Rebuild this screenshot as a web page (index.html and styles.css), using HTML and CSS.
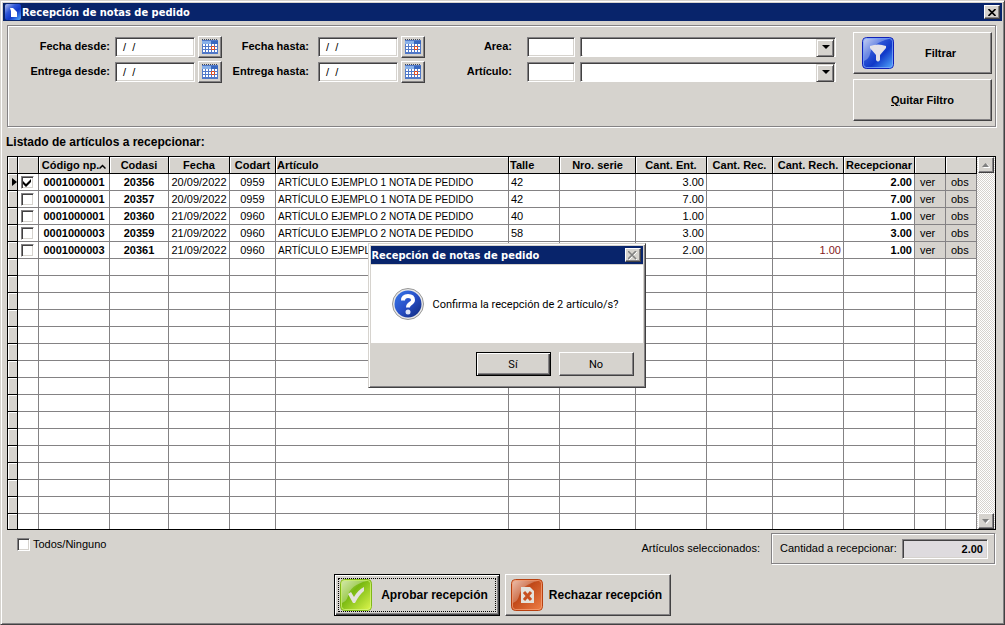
FILE: index.html
```html
<!DOCTYPE html>
<html lang="es">
<head>
    <meta charset="UTF-8">
    <meta name="viewport" content="width=device-width, initial-scale=1.0">
    <title>Recepción de notas de pedido</title>
    <link rel="stylesheet" href="styles.css">
</head>
<body>
<main class="window">
    <header class="titlebar">
        <svg class="app-icon" viewBox="0 0 16 16">
            <defs>
                <linearGradient id="blue" x1="0" y1="0" x2="1" y2="1">
                    <stop offset="0" stop-color="#b8c4f0"/>
                    <stop offset=".35" stop-color="#3058d8"/>
                    <stop offset=".6" stop-color="#1038c8"/>
                    <stop offset="1" stop-color="#58b0ff"/>
                </linearGradient>
            </defs>
            <rect width="16" height="16" rx="2" fill="url(#blue)"/>
            <path d="M5 4h3l4 4v5H6V7z" fill="#fff"/>
        </svg>
        <h1>Recepción de notas de pedido</h1>
        <button class="close" type="button" aria-label="Cerrar">
            <svg viewBox="0 0 8 7" width="8" height="7"><path d="M0 0l7 7M7 0L0 7" transform="translate(.5 0)" stroke="#000" stroke-width="1.600"/></svg>
        </button>
    </header>

    <form class="filters">
        <div class="fields">
            <label for="fdesde">Fecha desde:</label>
            <div class="date"><input id="fdesde" type="text" value="  /  /"><button type="button" class="cal" aria-label="Calendario"><svg width="16" height="16"><use href="#calendar"/></svg></button></div>
            <label for="fhasta">Fecha hasta:</label>
            <div class="date"><input id="fhasta" type="text" value="  /  /"><button type="button" class="cal" aria-label="Calendario"><svg width="16" height="16"><use href="#calendar"/></svg></button></div>
            <label for="area">Area:</label>
            <input id="area" type="text">
            <div class="combo"><select aria-label="Area"><option></option></select></div>

            <label for="edesde">Entrega desde:</label>
            <div class="date"><input id="edesde" type="text" value="  /  /"><button type="button" class="cal" aria-label="Calendario"><svg width="16" height="16"><use href="#calendar"/></svg></button></div>
            <label for="ehasta">Entrega hasta:</label>
            <div class="date"><input id="ehasta" type="text" value="  /  /"><button type="button" class="cal" aria-label="Calendario"><svg width="16" height="16"><use href="#calendar"/></svg></button></div>
            <label for="articulo">Artículo:</label>
            <input id="articulo" type="text">
            <div class="combo"><select aria-label="Artículo"><option></option></select></div>
        </div>
        <div class="filter-buttons">
            <button type="button" class="btn filtrar">
                <svg width="32" height="32" viewBox="0 0 32 32">
                    <rect x=".5" y=".5" width="31" height="31" rx="4" fill="url(#blue)" stroke="#1020b8"/>
                    <rect x="1.500" y="1.500" width="29" height="29" rx="3" fill="none" stroke="#88b0ff" opacity=".7"/>
                    <path d="M2 24V5q0-3 3-3h22Q10 6 8 17q-1 5-6 7z" fill="#fff" opacity=".3"/>
                    <path d="M8 9q8-3 16 0v2l-6 7v5q-2 3-4 0v-5l-6-7z" fill="#e4e2e8"/>
                </svg>
                <span>Filtrar</span>
            </button>
            <button type="button" class="btn"><span><u>Q</u>uitar Filtro</span></button>
        </div>
    </form>

    <h2>Listado de artículos a recepcionar:</h2>

    <div class="grid">
        <table>
            <colgroup>
                <col class="w-sel"><col class="w-check"><col class="w-np"><col class="w-codasi"><col class="w-fecha">
                <col class="w-codart"><col><col class="w-talle"><col class="w-serie"><col class="w-np">
                <col class="w-rec"><col class="w-np"><col class="w-np"><col class="w-link"><col class="w-link">
            </colgroup>
            <thead>
                <tr>
                    <th></th><th></th><th class="tight">Código np.<svg width="7" height="5" viewBox="0 0 7 5"><path d="M.5 4.500l3-3 3 3" fill="none" stroke="#000" stroke-width="1.500"/></svg></th><th>Codasi</th><th>Fecha</th><th>Codart</th>
                    <th class="left">Artículo</th><th class="left">Talle</th><th>Nro. serie</th><th>Cant. Ent.</th>
                    <th>Cant. Rec.</th><th>Cant. Rech.</th><th class="tight">Recepcionar</th><th></th><th></th>
                </tr>
            </thead>
            <tbody class="js-rows"></tbody>
        </table>
        <div class="scrollbar">
            <button type="button" aria-label="Subir"><svg width="8" height="5" viewBox="0 0 8 5"><path d="M1 5h8L5 1z" fill="#fff"/><path d="M0 4h7L3.500 0z" fill="#808080"/></svg></button>
            <button type="button" aria-label="Bajar"><svg width="8" height="5" viewBox="0 0 8 5"><path d="M1 1h7L4.500 5z" fill="#fff"/><path d="M0 0h7L3.500 4z" fill="#808080"/></svg></button>
        </div>
    </div>

    <div class="summary">
        <label class="all"><input type="checkbox" class="tick">Todos/Ninguno</label>
        <span class="selected">Artículos seleccionados:</span>
        <div class="total">
            <label for="cantidad">Cantidad a recepcionar:</label>
            <input id="cantidad" type="text" value="2.00" readonly>
        </div>
    </div>

    <div class="actions">
        <button type="button" class="btn big default">
            <svg width="32" height="32" viewBox="0 0 32 32">
                <defs>
                    <linearGradient id="green" x1="0" y1="0" x2="1" y2="1">
                        <stop offset="0" stop-color="#c8e090"/>
                        <stop offset=".4" stop-color="#78b810"/>
                        <stop offset="1" stop-color="#e0f850"/>
                    </linearGradient>
                </defs>
                <rect x=".5" y=".5" width="31" height="31" rx="4" fill="url(#green)" stroke="#80b818"/>
                <rect x="1.500" y="1.500" width="29" height="29" rx="3" fill="none" stroke="#d8f880" opacity=".7"/>
                <path d="M2 24V5q0-3 3-3h22Q10 6 8 17q-1 5-6 7z" fill="#fff" opacity=".3"/>
                <path d="M8 15l3-2 3 5q4-7 10-10v4q-5 4-9 12h-2z" fill="#e4e2dc"/>
            </svg>
            <span>Aprobar recepción</span>
        </button>
        <button type="button" class="btn big">
            <svg width="32" height="32" viewBox="0 0 32 32">
                <defs>
                    <linearGradient id="orange" x1="0" y1="0" x2="1" y2="1">
                        <stop offset="0" stop-color="#e8b098"/>
                        <stop offset=".4" stop-color="#c04818"/>
                        <stop offset="1" stop-color="#f08048"/>
                    </linearGradient>
                </defs>
                <rect x=".5" y=".5" width="31" height="31" rx="4" fill="url(#orange)" stroke="#b84010"/>
                <rect x="1.500" y="1.500" width="29" height="29" rx="3" fill="none" stroke="#f8a880" opacity=".7"/>
                <path d="M2 24V5q0-3 3-3h22Q10 6 8 17q-1 5-6 7z" fill="#fff" opacity=".25"/>
                <path d="M10 8h9l4 4v12H10z" fill="#e4e2dc"/>
                <path d="M13 13l7 8M20 13l-7 8" stroke="#c85020" stroke-width="3"/>
            </svg>
            <span>Rechazar recepción</span>
        </button>
    </div>

    <section class="dialog" role="dialog" aria-labelledby="dialog-title">
        <header class="titlebar">
            <h1 id="dialog-title">Recepción de notas de pedido</h1>
            <button class="close off" type="button" aria-label="Cerrar">
                <svg viewBox="0 0 9 9" width="9" height="9"><path d="M1 1l8 8M9 1L1 9" stroke="#fff"/><path d="M0 0l8 8M8 0L0 8" stroke="#808080" stroke-width="1.500"/></svg>
            </button>
        </header>
        <div class="message">
            <svg width="32" height="32" viewBox="0 0 32 32">
                <defs>
                    <linearGradient id="ask" x1="0" y1="0" x2="1" y2="1">
                        <stop offset="0" stop-color="#3878e8"/>
                        <stop offset=".5" stop-color="#2850c8"/>
                        <stop offset="1" stop-color="#102878"/>
                    </linearGradient>
                </defs>
                <circle cx="16" cy="16" r="15.500" fill="#e8e8e8" stroke="#989898"/>
                <circle cx="16" cy="16" r="13.500" fill="url(#ask)"/>
                <path d="M11 12.500q0-4.500 5-4.500t5 4q0 2-2.500 3.500t-2.500 4" fill="none" stroke="#fff" stroke-width="4"/>
                <circle cx="16" cy="24" r="2.500" fill="#dde4f8"/>
            </svg>
            <p>Confirma la recepción de 2 artículo/s?</p>
        </div>
        <div class="answers">
            <button type="button" class="btn default">Sí</button>
            <button type="button" class="btn">No</button>
        </div>
    </section>
</main>

<svg class="symbols">
    <symbol id="calendar" viewBox="0 0 16 16">
        <path d="M0 1h16v14H0z" fill="#5078c8"/>
        <path d="M0 2h16v3H0z" fill="#88b0e8"/>
        <path d="M9 2h7v3H9z" fill="#3868c0"/>
        <path d="M1 5h2v2H1zM4 5h2v2H4zM7 5h2v2H7zM10 5h2v2h-2zM13 5h2v2h-2zM1 8h2v2H1zM4 8h2v2H4zM7 8h2v2H7zM13 8h2v2h-2zM1 11h2v2H1zM4 11h2v2H4zM7 11h2v2H7zM10 11h2v2h-2zM13 11h2v2h-2z" fill="#fff"/>
        <path d="M9.500 7.500h3v3h-3z" fill="#fff" stroke="#e04818"/>
        <path d="M0 .5h16" stroke="#404858" stroke-dasharray="1 1"/>
    </symbol>
</svg>
<script src="script.js"></script>
</body>
</html>
```
FILE: styles.css
```css
*{
    box-sizing: border-box;
}
body{
    margin: 0;
    background-color: #d6d3ce;
    color: #000;
    font-family: "Liberation Sans", Arial, sans-serif;
    font-size: 11px;
    line-height: 13px;
}
button, input, select{
    font: inherit;
    color: inherit;
    border-radius: 0;
    margin: 0;
    padding: 0;
}
h1, h2, p{
    margin: 0;
}
.symbols{
    position: absolute;
    width: 0;
    height: 0;
}

.window{
    position: relative;
    min-height: 100vh;
    display: flex;
    flex-direction: column;
    padding: 1px;
    border: 1px solid;
    border-color: #d6d3ce #424142 #424142 #d6d3ce;
    box-shadow: inset 1px 1px #fff, inset -1px -1px #848284;
}
.titlebar{
    display: flex;
    align-items: center;
    height: 18px;
    margin: 1px;
    padding: 0 2px;
    background-color: #08246b;
    color: #fff;
}
.titlebar h1{
    flex: 1;
    font-family: "DejaVu Sans Condensed", "DejaVu Sans", sans-serif;
    font-size: 11px;
    font-weight: bold;
}
.app-icon{
    width: 16px;
    height: 16px;
    margin-right: 1px;
}

/* raised edges */
.btn, .cal, .close, .scrollbar button{
    display: flex;
    align-items: center;
    justify-content: center;
    background-color: #d6d3ce;
    border: 1px solid;
    border-color: #fff #424142 #424142 #fff;
    box-shadow: inset -1px -1px #848284;
}
.close{
    width: 16px;
    height: 14px;
}
.btn.default{
    border-color: #000;
    box-shadow: inset 1px 1px #fff, inset -1px -1px #424142, inset -2px -2px #848284;
}

/* sunken edges */
input[type="text"], .combo, .tick{
    background-color: #fff;
    border: 1px solid;
    border-color: #848284 #fff #fff #848284;
    box-shadow: inset 1px 1px #424142, inset -1px -1px #d6d3ce;
}

/* etched frames */
.filters, .total{
    display: flex;
    border: 1px solid #848284;
    box-shadow: inset 1px 1px #fff, 1px 1px #fff;
}
.filters{
    margin: 3px 7px 0 5px;
    height: 102px;
}
.fields{
    flex: 1;
    display: grid;
    grid-template-columns: 102px 108px 85px 107px 92px 48px 1fr;
    grid-auto-rows: 22px;
    align-content: start;
    align-items: center;
    gap: 3px 5px;
    padding: 10px 17px 0 0;
}
.fields label{
    padding-bottom: 2px;
    font-weight: bold;
    text-align: right;
}
.fields label:nth-of-type(3n+2){
    padding-right: 4px;
}
.fields label:nth-of-type(3n){
    padding-right: 10px;
}
.fields input{
    width: 100%;
    height: 20px;
    padding: 0 1px;
    white-space: pre;
}
.date{
    display: flex;
    align-items: center;
    gap: 3px;
}
.date input{
    width: 80px;
}
.cal{
    width: 24px;
    height: 22px;
}
.combo{
    height: 20px;
    padding: 2px;
    position: relative;
}
.combo select{
    appearance: none;
    display: block;
    width: 100%;
    height: 16px;
    border: 0;
    background-color: #fff;
}
/* arrow button of the combo, drawn over the select */
.combo::before{
    content: "";
    position: absolute;
    right: 1px;
    top: 1px;
    width: 16px;
    height: 16px;
    background-color: #d6d3ce;
    border: 1px solid;
    border-color: #d6d3ce #424142 #424142 #d6d3ce;
    box-shadow: inset 1px 1px #fff, inset -1px -1px #848284;
    pointer-events: none;
}
.combo::after{
    content: "";
    position: absolute;
    right: 5px;
    top: 7px;
    border: 4px solid transparent;
    border-top-color: #000;
    border-bottom: 0;
    pointer-events: none;
}
.filter-buttons{
    width: 142px;
    display: flex;
    flex-direction: column;
    gap: 5px;
    padding: 6px 3px 0 0;
}
.filter-buttons .btn{
    height: 42px;
    font-weight: bold;
}
.filtrar{
    padding: 0 8px;
}
.filtrar span{
    flex: 1;
    padding-left: 4px;
}

h2{
    padding: 9px 5px 7px 4px;
    font-size: 12px;
    line-height: 13px;
}

.grid{
    display: flex;
    margin: 0 7px 0 5px;
    height: 374px;
    overflow: hidden;
    border: 1px solid #000;
    background-color: #fff;
}
table{
    flex: 1;
    width: 100%;
    table-layout: fixed;
    border-collapse: separate;
    border-spacing: 0;
}
.w-sel{ width: 10px; }
.w-check{ width: 21px; }
.w-np{ width: 71px; }
.w-codasi{ width: 59px; }
.w-fecha{ width: 61px; }
.w-codart{ width: 46px; }
.w-talle{ width: 51px; }
.w-serie{ width: 76px; }
.w-rec{ width: 66px; }
.w-link{ width: 31px; }
th, td{
    height: 17px;
    padding: 0 2px;
    line-height: 13px;
    overflow: hidden;
    white-space: nowrap;
    text-align: center;
    border-right: 1px solid #848284;
    border-bottom: 1px solid #848284;
}
th{
    background-color: #d6d3ce;
    border-color: #000;
    box-shadow: inset 1px 1px #fff;
}
th.tight{
    padding: 0;
}
.left{
    text-align: left;
}
th.left{
    padding: 0 1px;
}
.right{
    text-align: right;
}
.bold{
    font-weight: bold;
}
.red{
    color: #842021;
}
.name{
    font-size: 10px;
}
.marker{
    padding: 0;
    background-color: #d6d3ce;
    border-color: #000;
    box-shadow: inset 1px 1px #fff;
}
.marker svg{
    display: block;
    margin-left: auto;
}
.link{
    background-color: #d6d3ce;
    padding: 0 5px;
}
.tick{
    appearance: none;
    width: 13px;
    height: 13px;
}
.check{
    display: grid;
}
.check .tick, .check svg{
    grid-area: 1 / 1;
}
.check .tick{
    margin-left: 1px;
}
.check svg{
    margin: 3px 0 0 3px;
    z-index: 1;
    pointer-events: none;
}
.scrollbar{
    width: 18px;
    display: flex;
    flex-direction: column;
    justify-content: space-between;
    padding: 0 1px;
    background: repeating-conic-gradient(#fff 0 25%, #d6d3ce 0 50%) 0 0 / 2px 2px;
}
.scrollbar button{
    width: 16px;
    height: 16px;
}

.summary{
    display: flex;
    align-items: flex-start;
    margin: 3px 8px 0 15px;
}
.all{
    flex: 1;
    display: flex;
    align-items: center;
    gap: 3px;
    padding-top: 5px;
}
.selected{
    padding: 9px 11px 0 0;
}
.total{
    align-items: center;
    width: 224px;
    height: 31px;
    padding: 0 6px 0 8px;
}
.total label{
    flex: 1;
}
.total input[type="text"]{
    width: 86px;
    height: 20px;
    padding-right: 4px;
    background-color: #dedbde;
    font-weight: bold;
    text-align: right;
}

.actions{
    display: flex;
    justify-content: center;
    gap: 5px;
    padding: 10px 0 7px;
}
.big{
    width: 166px;
    height: 42px;
    padding: 0 5px;
    font-size: 12px;
    font-weight: bold;
}
.big span{
    flex: 1;
    padding-left: 3px;
}
.big.default{
    position: relative;
}
/* dotted focus ring inside the edge */
.big.default::after{
    content: "";
    position: absolute;
    inset: 3px;
    border: 1px dotted #000;
}

.dialog{
    position: absolute;
    left: calc(50% - 135px);
    top: 242px;
    width: 278px;
    padding: 2px;
    background-color: #d6d3ce;
    border: 1px solid;
    border-color: #d6d3ce #424142 #424142 #d6d3ce;
    box-shadow: inset 1px 1px #fff, inset -1px -1px #848284;
    font-family: Roboto, sans-serif;
}
.dialog .titlebar{
    margin: 0 0 1px;
    padding: 0 2px 0 1px;
}
.message{
    display: flex;
    align-items: center;
    gap: 9px;
    height: 78px;
    padding-left: 21px;
    background-color: #fff;
}
.answers{
    display: flex;
    justify-content: flex-end;
    gap: 8px;
    padding: 9px;
}
.answers .btn{
    width: 75px;
    height: 24px;
}
```
FILE: script.js
```js
let rows=[
    {np:'0001000001', codasi:'20356', fecha:'20/09/2022', codart:'0959', articulo:'ARTÍCULO EJEMPLO 1 NOTA DE PEDIDO', talle:'42', ent:'3.00', rech:'', recep:'2.00', checked:true},
    {np:'0001000001', codasi:'20357', fecha:'20/09/2022', codart:'0959', articulo:'ARTÍCULO EJEMPLO 1 NOTA DE PEDIDO', talle:'42', ent:'7.00', rech:'', recep:'7.00'},
    {np:'0001000001', codasi:'20360', fecha:'21/09/2022', codart:'0960', articulo:'ARTÍCULO EJEMPLO 2 NOTA DE PEDIDO', talle:'40', ent:'1.00', rech:'', recep:'1.00'},
    {np:'0001000003', codasi:'20359', fecha:'21/09/2022', codart:'0960', articulo:'ARTÍCULO EJEMPLO 2 NOTA DE PEDIDO', talle:'58', ent:'3.00', rech:'', recep:'3.00'},
    {np:'0001000003', codasi:'20361', fecha:'21/09/2022', codart:'0960', articulo:'ARTÍCULO EJEMPL', talle:'', ent:'2.00', rech:'1.00', recep:'1.00'}
];

//the grid always shows 21 lines, the last ones empty
const totalLines=21;
let html='';

rows.forEach(function(r){
    let arrow=r.checked ? '<svg width="5" height="8"><path d="M0 0l5 4-5 4z"/></svg>' : '';
    let mark=r.checked ? '<svg width="9" height="8"><path d="M0 2l3 3 5-5v3L3 8 0 5z"/></svg>' : '';
    html+=`<tr>
        <td class="marker">${arrow}</td>
        <td><div class="check"><input type="checkbox" class="tick" aria-label="${r.codasi}" ${r.checked ? 'checked' : ''}>${mark}</div></td>
        <td class="bold">${r.np}</td>
        <td class="bold">${r.codasi}</td>
        <td>${r.fecha}</td>
        <td>${r.codart}</td>
        <td class="left name">${r.articulo}</td>
        <td class="left">${r.talle}</td>
        <td></td>
        <td class="right">${r.ent}</td>
        <td></td>
        <td class="right red">${r.rech}</td>
        <td class="right bold">${r.recep}</td>
        <td class="link left">ver</td>
        <td class="link left">obs</td>
    </tr>`;
});

for(let i=rows.length;i<totalLines;i++)
{
    html+='<tr><td class="marker"></td>'+'<td></td>'.repeat(14)+'</tr>';
}

document.querySelector('.js-rows').innerHTML=html;
```
